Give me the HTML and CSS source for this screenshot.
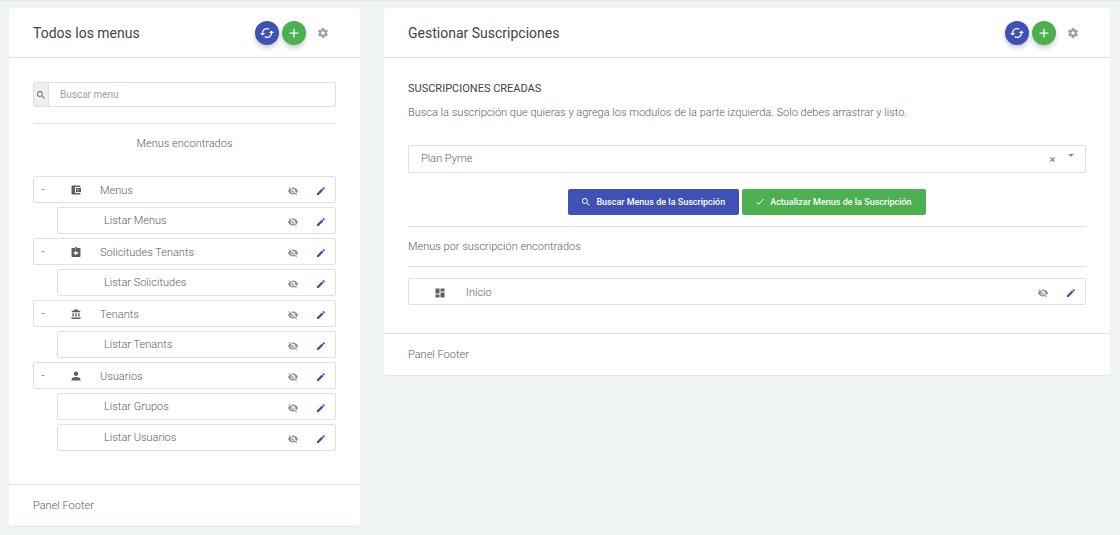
FILE: index.html
```html
<!DOCTYPE html>
<html lang="es">
<head>
<meta charset="utf-8">
<meta name="viewport" content="width=device-width, initial-scale=1">
<title>Gestionar Suscripciones</title>
<link rel="stylesheet" href="styles.css">
</head>
<body>
<svg class="sprite" aria-hidden="true">
  <symbol id="i-cached" viewBox="1 1 22 22"><path d="M19 8l-4 4h3c0 3.31-2.69 6-6 6-1.01 0-1.97-.25-2.8-.7l-1.46 1.46C8.97 19.54 10.43 20 12 20c4.42 0 8-3.58 8-8h3l-4-4zM6 12c0-3.31 2.69-6 6-6 1.01 0 1.97.25 2.8.7l1.46-1.46C15.03 4.46 13.57 4 12 4c-4.42 0-8 3.58-8 8H1l4 4 4-4H6z"/></symbol>
  <symbol id="i-plus" viewBox="4 4 16 16"><path d="M19 13h-6v6h-2v-6H5v-2h6V5h2v6h6v2z"/></symbol>
  <symbol id="i-gear" viewBox="2 2 20 20"><path d="M19.43 12.98c.04-.32.07-.64.07-.98s-.03-.66-.07-.98l2.11-1.65c.19-.15.24-.42.12-.64l-2-3.46c-.12-.22-.39-.3-.61-.22l-2.49 1c-.52-.4-1.08-.73-1.69-.98l-.38-2.65C14.46 2.18 14.25 2 14 2h-4c-.25 0-.46.18-.49.42l-.38 2.65c-.61.25-1.17.59-1.69.98l-2.49-1c-.23-.09-.49 0-.61.22l-2 3.46c-.13.22-.07.49.12.64l2.11 1.65c-.04.32-.07.65-.07.98s.03.66.07.98l-2.11 1.65c-.19.15-.24.42-.12.64l2 3.46c.12.22.39.3.61.22l2.49-1c.52.4 1.08.73 1.69.98l.38 2.65c.03.24.24.42.49.42h4c.25 0 .46-.18.49-.42l.38-2.65c.61-.25 1.17-.59 1.69-.98l2.49 1c.23.09.49 0 .61-.22l2-3.46c.12-.22.07-.49-.12-.64l-2.11-1.65zM12 15.5c-1.93 0-3.5-1.57-3.5-3.5s1.57-3.5 3.5-3.5 3.5 1.57 3.5 3.5-1.57 3.5-3.5 3.5z"/></symbol>
  <symbol id="i-search" viewBox="3 3 18 18"><path d="M15.5 14h-.79l-.28-.27C15.41 12.59 16 11.11 16 9.5 16 5.91 13.09 3 9.5 3S3 5.91 3 9.5 5.91 16 9.5 16c1.61 0 3.09-.59 4.23-1.57l.27.28v.79l5 4.99L20.49 19l-4.99-5zm-6 0C7.01 14 5 11.99 5 9.5S7.01 5 9.5 5 14 7.01 14 9.5 11.99 14 9.5 14z"/></symbol>
  <symbol id="i-wallet" viewBox="2 2 20 20"><path d="M21 18v1c0 1.1-.9 2-2 2H5c-1.11 0-2-.9-2-2V5c0-1.1.89-2 2-2h14c1.1 0 2 .9 2 2v1h-9c-1.11 0-2 .9-2 2v8c0 1.1.89 2 2 2h9zm-9-2h10V8H12v8zm4-2.500c-.83 0-1.500-.67-1.500-1.500s.67-1.500 1.500-1.500 1.500.67 1.500 1.500-.67 1.500-1.500 1.500z"/></symbol>
  <symbol id="i-return" viewBox="2 1 20 20"><path d="M19 3h-4.180C14.400 1.840 13.300 1 12 1s-2.400.84-2.820 2H5c-1.100 0-2 .9-2 2v14c0 1.100.9 2 2 2h14c1.100 0 2-.9 2-2V5c0-1.100-.9-2-2-2zm-7 0c.55 0 1 .45 1 1s-.45 1-1 1-1-.45-1-1 .45-1 1-1zm4 12h-4v3l-5-5 5-5v3h4v4z"/></symbol>
  <symbol id="i-bank" viewBox="1 1 21 21"><path d="M4 10v7h3v-7H4zm6 0v7h3v-7h-3zM2 22h19v-3H2v3zm14-12v7h3v-7h-3zm-4.500-9L2 6v2h19V6l-9.500-5z"/></symbol>
  <symbol id="i-user" viewBox="3 3 18 18"><path d="M12 12c2.210 0 4-1.790 4-4s-1.790-4-4-4-4 1.790-4 4 1.790 4 4 4zm0 2c-2.670 0-8 1.340-8 4v2h16v-2c0-2.660-5.330-4-8-4z"/></symbol>
  <symbol id="i-dashboard" viewBox="2 2 20 20"><path d="M3 13h8V3H3v10zm0 8h8v-6H3v6zm10 0h8V11h-8v10zm0-18v6h8V3h-8z"/></symbol>
  <symbol id="i-hidden" viewBox="1 1 22 22"><path d="M12 7c2.760 0 5 2.240 5 5 0 .65-.13 1.260-.36 1.830l2.920 2.920c1.510-1.260 2.700-2.890 3.430-4.750-1.730-4.390-6-7.500-11-7.500-1.400 0-2.740.25-3.980.7l2.160 2.160C10.740 7.130 11.350 7 12 7zM2 4.270l2.280 2.280.46.46C3.080 8.300 1.780 10.020 1 12c1.730 4.390 6 7.500 11 7.500 1.550 0 3.030-.3 4.380-.84l.42.42L19.730 22 21 20.730 3.270 3 2 4.270zM7.530 9.800l1.550 1.550c-.05.21-.08.43-.08.65 0 1.660 1.340 3 3 3 .22 0 .44-.03.65-.08l1.550 1.550c-.67.33-1.410.53-2.200.53-2.760 0-5-2.240-5-5 0-.79.2-1.530.53-2.200zm4.310-.78l3.150 3.150.02-.16c0-1.660-1.340-3-3-3l-.17.01z"/></symbol>
  <symbol id="i-pencil" viewBox="3 3 18 18"><path d="M3 17.250V21h3.750L17.810 9.940l-3.750-3.750L3 17.250zM20.710 7.040c.39-.39.39-1.020 0-1.410l-2.340-2.340c-.39-.39-1.020-.39-1.410 0l-1.830 1.830 3.750 3.750 1.830-1.830z"/></symbol>
  <symbol id="i-check" viewBox="3 4 18 18"><path d="M9 16.170L4.830 12l-1.420 1.410L9 19 21 7l-1.410-1.410z"/></symbol>
  <symbol id="i-close" viewBox="5 5 14 14"><path d="M19 7.500L16.500 5 12 9.500 7.500 5 5 7.500 9.500 12 5 16.500 7.500 19 12 14.500 16.500 19 19 16.500 14.500 12z"/></symbol>
  <symbol id="i-caret" viewBox="0 0 6 3"><path d="M0 0h6L3 3z"/></symbol>
</svg>

<main class="layout">
  <section class="panel">
    <header class="panel-head">
      <h1 class="panel-title">Todos los menus</h1>
      <button class="fab fab-blue" type="button" aria-label="Refrescar"><svg class="icon-lg"><use href="#i-cached"/></svg></button>
      <button class="fab fab-green" type="button" aria-label="Agregar"><svg class="icon"><use href="#i-plus"/></svg></button>
      <button class="plain gear" type="button" aria-label="Opciones"><svg class="icon"><use href="#i-gear"/></svg></button>
    </header>
    <div class="panel-body">
      <div class="search">
        <label class="search-addon" for="buscar" aria-label="Buscar menu"><svg class="icon-sm"><use href="#i-search"/></svg></label>
        <input class="search-input" id="buscar" type="text" placeholder="Buscar menu">
      </div>
      <hr class="rule rule-search">
      <p class="found">Menus encontrados</p>
      <ul class="tree tree-all">
        <li class="row"><button class="plain toggle" type="button">-</button><svg class="icon row-icon"><use href="#i-wallet"/></svg><span class="row-label">Menus</span><button class="plain act" type="button" aria-label="Ocultar"><svg class="icon"><use href="#i-hidden"/></svg></button><button class="plain act edit" type="button" aria-label="Editar"><svg class="icon-sm"><use href="#i-pencil"/></svg></button></li>
        <li class="row row-child"><span class="row-label">Listar Menus</span><button class="plain act" type="button" aria-label="Ocultar"><svg class="icon"><use href="#i-hidden"/></svg></button><button class="plain act edit" type="button" aria-label="Editar"><svg class="icon-sm"><use href="#i-pencil"/></svg></button></li>
        <li class="row"><button class="plain toggle" type="button">-</button><svg class="icon row-icon"><use href="#i-return"/></svg><span class="row-label">Solicitudes Tenants</span><button class="plain act" type="button" aria-label="Ocultar"><svg class="icon"><use href="#i-hidden"/></svg></button><button class="plain act edit" type="button" aria-label="Editar"><svg class="icon-sm"><use href="#i-pencil"/></svg></button></li>
        <li class="row row-child"><span class="row-label">Listar Solicitudes</span><button class="plain act" type="button" aria-label="Ocultar"><svg class="icon"><use href="#i-hidden"/></svg></button><button class="plain act edit" type="button" aria-label="Editar"><svg class="icon-sm"><use href="#i-pencil"/></svg></button></li>
        <li class="row"><button class="plain toggle" type="button">-</button><svg class="icon row-icon"><use href="#i-bank"/></svg><span class="row-label">Tenants</span><button class="plain act" type="button" aria-label="Ocultar"><svg class="icon"><use href="#i-hidden"/></svg></button><button class="plain act edit" type="button" aria-label="Editar"><svg class="icon-sm"><use href="#i-pencil"/></svg></button></li>
        <li class="row row-child"><span class="row-label">Listar Tenants</span><button class="plain act" type="button" aria-label="Ocultar"><svg class="icon"><use href="#i-hidden"/></svg></button><button class="plain act edit" type="button" aria-label="Editar"><svg class="icon-sm"><use href="#i-pencil"/></svg></button></li>
        <li class="row"><button class="plain toggle" type="button">-</button><svg class="icon row-icon"><use href="#i-user"/></svg><span class="row-label">Usuarios</span><button class="plain act" type="button" aria-label="Ocultar"><svg class="icon"><use href="#i-hidden"/></svg></button><button class="plain act edit" type="button" aria-label="Editar"><svg class="icon-sm"><use href="#i-pencil"/></svg></button></li>
        <li class="row row-child"><span class="row-label">Listar Grupos</span><button class="plain act" type="button" aria-label="Ocultar"><svg class="icon"><use href="#i-hidden"/></svg></button><button class="plain act edit" type="button" aria-label="Editar"><svg class="icon-sm"><use href="#i-pencil"/></svg></button></li>
        <li class="row row-child"><span class="row-label">Listar Usuarios</span><button class="plain act" type="button" aria-label="Ocultar"><svg class="icon"><use href="#i-hidden"/></svg></button><button class="plain act edit" type="button" aria-label="Editar"><svg class="icon-sm"><use href="#i-pencil"/></svg></button></li>
      </ul>
    </div>
    <footer class="panel-foot">Panel Footer</footer>
  </section>

  <section class="panel">
    <header class="panel-head">
      <h1 class="panel-title">Gestionar Suscripciones</h1>
      <button class="fab fab-blue" type="button" aria-label="Refrescar"><svg class="icon-lg"><use href="#i-cached"/></svg></button>
      <button class="fab fab-green" type="button" aria-label="Agregar"><svg class="icon"><use href="#i-plus"/></svg></button>
      <button class="plain gear" type="button" aria-label="Opciones"><svg class="icon"><use href="#i-gear"/></svg></button>
    </header>
    <div class="panel-body">
      <h2 class="subtitle"><label for="plan">Suscripciones creadas</label></h2>
      <p class="hint">Busca la suscripción que quieras y agrega los modulos de la parte izquierda. Solo debes arrastrar y listo.</p>
      <div class="picker">
        <select class="picker-select" id="plan"><option>Plan Pyme</option></select>
        <button class="plain picker-clear" type="button" aria-label="Limpiar"><svg class="icon-xs"><use href="#i-close"/></svg></button>
        <svg class="picker-caret"><use href="#i-caret"/></svg>
      </div>
      <div class="actions">
        <button class="btn fab-blue" type="button"><svg class="icon-sm"><use href="#i-search"/></svg>Buscar Menus de la Suscripción</button>
        <button class="btn fab-green" type="button"><svg class="icon-sm"><use href="#i-check"/></svg>Actualizar Menus de la Suscripción</button>
      </div>
      <hr class="rule">
      <p class="found-plan">Menus por suscripción encontrados</p>
      <hr class="rule rule-list">
      <ul class="tree">
        <li class="row row-flat"><svg class="icon row-icon"><use href="#i-dashboard"/></svg><span class="row-label">Inicio</span><button class="plain act" type="button" aria-label="Ocultar"><svg class="icon"><use href="#i-hidden"/></svg></button><button class="plain act edit" type="button" aria-label="Editar"><svg class="icon-sm"><use href="#i-pencil"/></svg></button></li>
      </ul>
    </div>
    <footer class="panel-foot">Panel Footer</footer>
  </section>
</main>
</body>
</html>
```
FILE: styles.css
```css
* {
  box-sizing: border-box;
}

body {
  margin: 0;
  background: #eff3f4;
  box-shadow: inset 0 1px 1px rgba(0, 0, 0, 0.06);
  color: #5e5e5e;
  font: 300 11px/16px Roboto, "Liberation Sans", sans-serif;
}

h1, h2, p, ul {
  margin: 0;
  padding: 0;
}

svg {
  display: block;
  flex: none;
  fill: currentColor;
}

.sprite {
  position: absolute;
  width: 0;
  height: 0;
}

.icon-xs { width: 5px; height: 5px; }
.icon-sm { width: 8px; height: 8px; }
.icon { width: 10px; height: 10px; }
.icon-lg { width: 14px; height: 14px; }

.layout {
  display: grid;
  grid-template-columns: minmax(0, 351fr) minmax(0, 726fr);
  align-items: start;
  gap: 24px;
  padding: 8px 10px 8px 9px;
}

.panel {
  background: #fff;
  border-radius: 3px;
  box-shadow: 0 1px 1px rgba(0, 0, 0, 0.05);
}

.panel-head {
  display: flex;
  align-items: center;
  gap: 3px;
  height: 50px;
  padding: 0 24px;
  border-bottom: 1px solid #e0e0e0;
}

.panel-title {
  flex: 1;
  color: #424242;
  font-size: 14px;
  font-weight: 400;
}

.fab, .plain {
  display: flex;
  align-items: center;
  justify-content: center;
  padding: 0;
  border: 0;
  font: inherit;
}

.plain {
  background: none;
  color: inherit;
}

.fab {
  width: 24px;
  height: 24px;
  border-radius: 50%;
  color: #fff;
  box-shadow: 0 3px 5px rgba(0, 0, 0, 0.2);
}

.fab-blue { background: #3f51b5; }
.fab-green { background: #4caf50; }

.gear {
  width: 27px;
  color: #9e9e9e;
}

.panel-body {
  padding: 24px 24px 28px;
}

.panel-foot {
  padding: 13px 24px 12px;
  border-top: 1px solid #e0e0e0;
}

.search {
  display: flex;
  height: 25px;
  border: 1px solid #e0e0e0;
  border-radius: 2px;
}

.search-addon {
  display: flex;
  align-items: center;
  justify-content: center;
  width: 15px;
  border-right: 1px solid #e0e0e0;
  background: #eee;
}

.search-input {
  flex: 1;
  min-width: 0;
  padding: 0 11px;
  border: 0;
  background: none;
  color: #757575;
  font: 400 10px/16px Roboto, "Liberation Sans", sans-serif;
}

.search-input::placeholder {
  color: #9e9e9e;
}

.rule {
  height: 1px;
  margin: 0;
  border: 0;
  background: #e0e0e0;
}

.rule-search {
  margin: 16px 0 12px;
}

.rule-list {
  margin-bottom: 11px;
}

.found {
  margin-bottom: 24px;
  text-align: center;
}

.tree {
  display: grid;
  gap: 4px;
  list-style: none;
}

.tree-all {
  margin-bottom: 5px;
}

.row {
  display: flex;
  align-items: center;
  height: 27px;
  padding-right: 7px;
  border: 1px solid #e0e0e0;
  border-radius: 2px;
}

.row-child {
  margin-left: 24px;
  padding-left: 46px;
}

.row-flat {
  padding-left: 26px;
}

.toggle {
  width: 18px;
  margin-right: 19px;
  color: #424242;
}

.row-icon {
  margin-right: 19px;
}

.row-flat .row-icon {
  margin-top: 3px;
  margin-right: 21px;
}

.row-label {
  flex: 1;
  margin-top: 3px;
}

.row-child .row-label {
  margin-top: 1px;
}

.act {
  width: 14px;
  height: 14px;
  margin-left: 14px;
  margin-top: 3px;
  color: #8e8e8e;
}

.edit {
  color: #3f51b5;
}

.subtitle {
  margin: -1px 0 8px;
  color: #424242;
  font-size: 11px;
  font-weight: 400;
  text-transform: uppercase;
}

.picker {
  display: flex;
  height: 28px;
  margin-top: 24px;
  border: 1px solid #e0e0e0;
  border-radius: 2px;
}

.picker-select {
  flex: 1;
  min-width: 0;
  padding: 0 12px;
  border: 0;
  appearance: none;
  background: none;
  color: inherit;
  font: inherit;
}

.picker-clear {
  width: 15px;
  color: #8e8e8e;
}

.picker-caret {
  width: 6px;
  height: 3px;
  margin: 8px 11px 0 8px;
  color: #8e8e8e;
}

.actions {
  display: flex;
  justify-content: center;
  gap: 3px;
  margin: 16px 0 11px;
}

.btn {
  display: flex;
  align-items: center;
  gap: 6px;
  height: 26px;
  padding: 0 14px;
  border: 0;
  border-radius: 2px;
  color: #fff;
  font: 500 9px/16px Roboto, "Liberation Sans", sans-serif;
}

.found-plan {
  padding: 12px 0 11px;
}
```
